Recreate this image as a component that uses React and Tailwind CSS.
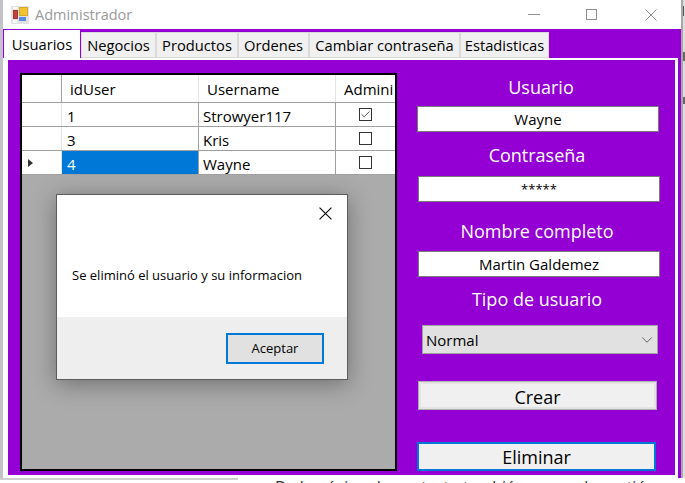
import { ChevronDown, Check } from "lucide-react";

const tabs = [
  { label: "Negocios", width: "w-[75px]" },
  { label: "Productos", width: "w-[82px]" },
  { label: "Ordenes", width: "w-[71px]" },
  { label: "Cambiar contraseña", width: "w-[151px]" },
  { label: "Estadisticas", width: "w-[89px]" },
];

const users = [
  { id: 1, name: "Strowyer117", admin: true },
  { id: 3, name: "Kris", admin: false },
  { id: 4, name: "Wayne", admin: false, current: true },
];

function AppIcon() {
  return (
    <svg width="18" height="18" viewBox="0 0 18 18" className="shrink-0">
      <rect width="18" height="18" fill="#e2e2e2" />
      <rect x="8.5" y="1.5" width="8" height="8" fill="#f2c230" stroke="#d8a828" />
      <rect x="2.5" y="4.5" width="4" height="8" fill="#c9423a" stroke="#a03a36" />
      <rect x="8" y="11" width="7" height="4" fill="#5a8be0" />
      <rect x="2" y="1" width="4" height="2" fill="#fafafa" />
      <rect x="2" y="14" width="4" height="3" fill="#fafafa" />
    </svg>
  );
}

function CloseGlyph({ size, className }) {
  return (
    <svg width={size} height={size} viewBox="0 0 12 12" className={className}>
      <path d="M0.5 0.5 L11.5 11.5 M11.5 0.5 L0.5 11.5" stroke="currentColor" strokeWidth="1" fill="none" />
    </svg>
  );
}

function Field({ value, small }) {
  return (
    <div
      className={`w-[242px] h-[26px] pt-[1px] bg-white border border-[#7a7a7a] flex items-center justify-center text-black leading-none ${
        small ? "text-[13px]" : "text-[15px]"
      }`}
    >
      {value}
    </div>
  );
}

function GridCheck({ checked }) {
  return (
    <div className="w-[13px] h-[13px] border border-[#333] bg-white flex items-center justify-center">
      {checked && <Check size={11} strokeWidth={2} className="text-[#444]" />}
    </div>
  );
}

function Row({ user }) {
  return (
    <div className="flex h-[24px] bg-white border-b border-[#a0a0a0] text-[15px] text-black">
      <div className="w-[40px] border-r border-[#e4e4e4] flex items-center pl-[6px]">
        {user.current && (
          <div className="w-0 h-0 border-y-[4px] border-y-transparent border-l-[5px] border-l-[#333]" />
        )}
      </div>
      <div
        className={`w-[137px] border-r border-[#a0a0a0] flex items-center pl-[5px] pt-[3px] ${
          user.current ? "bg-[#0078d7] text-white" : ""
        }`}
      >
        {user.id}
      </div>
      <div className="w-[137px] border-r border-[#a0a0a0] flex items-center pl-[4px] pt-[3px]">{user.name}</div>
      <div className="flex-1 flex items-center justify-center">
        <GridCheck checked={user.admin} />
      </div>
    </div>
  );
}

function Dialog() {
  return (
    <div className="absolute left-[34px] top-[119px] w-[292px] h-[186px] bg-white border border-[#5c5c5c] flex flex-col shadow-[0_4px_22px_rgba(0,0,0,0.35)]">
      <div className="h-[122px] flex flex-col">
        <div className="flex justify-end pr-[15px] pt-[12px]">
          <CloseGlyph size={13} className="text-black" />
        </div>
        <p className="mt-[49px] pl-[15px] text-[13px] leading-none text-black">Se eliminó el usuario y su informacion</p>
      </div>
      <div className="flex-1 bg-[#eeeeee] flex justify-end pt-[16px] pr-[23px]">
        <div className="w-[98px] h-[31px] bg-[#e1e1e1] border-2 border-[#0078d7] flex items-center justify-center text-[13px] text-black">
          Aceptar
        </div>
      </div>
    </div>
  );
}

export default function App() {
  return (
    <div className="w-[685px] h-[483px] bg-white overflow-hidden flex flex-col font-['Open_Sans','Noto_Sans',sans-serif]">
      <div className="flex h-[478px] shrink-0">
        <div className="w-[681px] border-l-[3px] border-[#c2c2c8] flex flex-col">
          {/* title bar */}
          <div className="h-[29px] bg-white flex items-center pl-[8px] pr-[24px] shrink-0">
            <AppIcon />
            <span className="ml-[6px] text-[14.5px] text-[#9a9a9a]">Administrador</span>
            <div className="ml-auto flex items-center text-[#8f8f8f]">
              <div className="w-[12px] h-px bg-[#8f8f8f]" />
              <div className="ml-[46px] w-[11px] h-[11px] border border-[#8f8f8f]" />
              <CloseGlyph size={12} className="ml-[48px]" />
            </div>
          </div>

          <div className="flex-1 bg-[#9400d3] flex flex-col">
            {/* tabs */}
            <div className="flex items-end h-[29px] pl-[1px] shrink-0 text-[14.7px] text-black">
              <div className="w-[76px] h-[28px] mr-[1px] bg-white flex items-center justify-center">Usuarios</div>
              {tabs.map((tab) => (
                <div
                  key={tab.label}
                  className={`${tab.width} h-[26px] pt-[1px] bg-[#f0f0f0] border border-[#d9d9d9] flex items-center justify-center whitespace-nowrap`}
                >
                  {tab.label}
                </div>
              ))}
            </div>

            {/* page */}
            <div className="w-[675px] h-[420px] bg-white pl-[5px] pr-[3px] pt-[2px] pb-[3px]">
              <div className="h-full bg-[#9400d3] flex pl-[12px] pt-[13px]">
                {/* data grid */}
                <div className="relative w-[377px] h-[398px] shrink-0 bg-[#ababab] border-2 border-black overflow-hidden">
                  <div className="flex h-[28px] bg-white border-b border-[#a0a0a0] text-[15px] text-black">
                    <div className="w-[40px] border-r border-[#a0a0a0]" />
                    <div className="w-[137px] border-r border-[#e4e4e4] flex items-center pl-[8px] pt-[2px]">idUser</div>
                    <div className="w-[137px] border-r border-[#e4e4e4] flex items-center pl-[8px] pt-[2px]">Username</div>
                    <div className="flex-1 flex items-center pl-[8px] pt-[2px] whitespace-nowrap">Admini</div>
                  </div>
                  {users.map((user) => (
                    <Row key={user.id} user={user} />
                  ))}
                  <Dialog />
                </div>

                {/* form */}
                <div className="ml-[21px] w-[242px] flex flex-col items-center text-white text-[18px] leading-none">
                  <p className="mt-[5px] ml-[4px]">Usuario</p>
                  <div className="mt-[10px] self-start -ml-[1px]">
                    <Field value="Wayne" />
                  </div>
                  <p className="mt-[14px] mr-[4px]">Contraseña</p>
                  <div className="mt-[12px]">
                    <Field value="*****" small />
                  </div>
                  <p className="mt-[20px] mr-[4px]">Nombre completo</p>
                  <div className="mt-[11px]">
                    <Field value="Martin Galdemez" />
                  </div>
                  <p className="mt-[13px] mr-[4px]">Tipo de usuario</p>
                  <div className="mt-[17px] self-start ml-[4px] w-[236px] h-[29px] pt-[1px] bg-[#e1e1e1] border border-[#a0a0a0] flex items-center pl-[3px] pr-[1px] text-[15px] text-black">
                    Normal
                    <ChevronDown size={18} strokeWidth={1} className="ml-auto text-[#333]" />
                  </div>
                  <div className="mt-[27px] self-start w-[239px] h-[29px] pt-[2px] bg-[#f0f0f0] border border-[#adadad] shadow-[inset_0_0_0_2px_#e3e3e3] flex items-center justify-center text-[18px] text-black">
                    Crear
                  </div>
                  <div className="mt-[32px] self-start -ml-[1px] w-[239px] h-[29px] bg-[#f0f0f0] border-2 border-[#0078d7] flex items-center justify-center text-[18px] text-black">
                    Eliminar
                  </div>
                </div>
              </div>
            </div>
          </div>
        </div>
        {/* page behind the window, right side: only slivers of its text show */}
        <div className="flex-1 bg-[#dedede] border-l-2 border-[#a8a8a8] flex flex-col">
          <div className="mt-[6px] w-[1px] h-[10px] bg-[#555]" />
          <div className="mt-[36px] w-[2px] h-[9px] bg-[#666]" />
          <div className="mt-[36px] w-[2px] h-[7px] bg-[#666]" />
        </div>
      </div>
      {/* page behind the window, bottom */}
      <div className="flex-1 flex overflow-hidden">
        <div className="w-[238px] h-[2px] bg-[#cfcfcf] shrink-0" />
        <div className="pl-[37px] pt-[2px] whitespace-nowrap text-[16px] leading-[15px] text-[#333]">
          De la página de contacto también se puede gestión
        </div>
      </div>
    </div>
  );
}
